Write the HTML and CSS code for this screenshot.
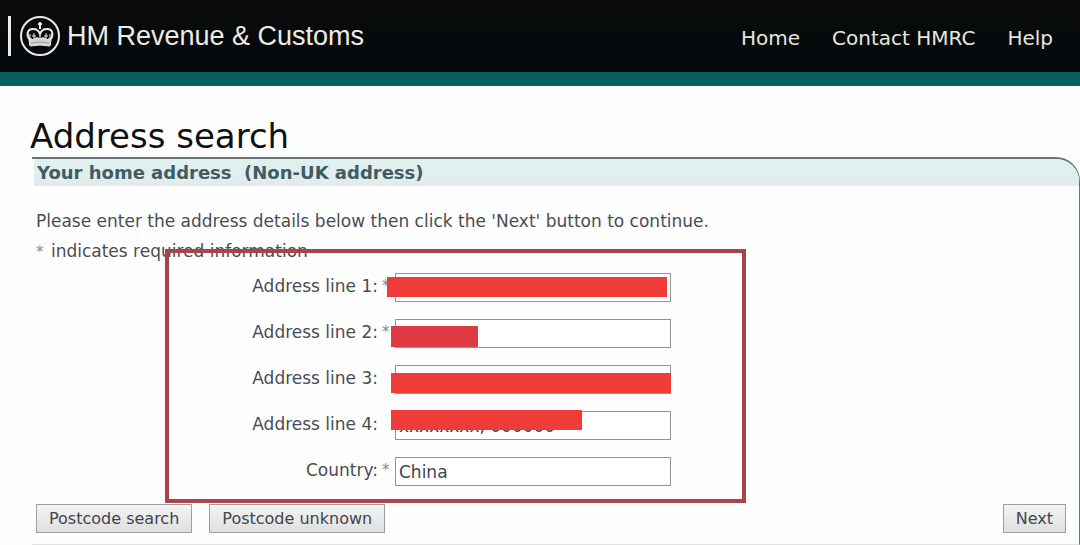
FILE: index.html
```html
<!DOCTYPE html>
<html lang="en">
<head>
    <meta charset="UTF-8">
    <meta name="viewport" content="width=device-width, initial-scale=1.0">
    <title>Address search</title>
    <link rel="stylesheet" href="styles.css">
</head>
<body>
    <header class="header">
        <div class="logo">
            <svg class="crest" width="40" height="40" viewBox="0 0 40 40" fill="none" stroke="#eeeae6">
                <circle cx="20" cy="20" r="19" stroke-width="2"/>
                <path d="M20 6v7M18 8h4" stroke-width="2"/>
                <path d="M10 24C6 19 7 13 13 13c4 0 6 2 7 5 1-3 3-5 7-5 6 0 7 6 3 11" stroke-width="2"/>
                <path d="M10 18v5M14 17v6M12 20h4M20 17v6M26 17v6M24 20h4M30 18v5" stroke-width="1"/>
                <path d="M9 24q2-3 4 0 3-4 7-1 4-3 7 1 2-3 4 0l-1 6q-10-2-20 0z" fill="#d5d3d0" stroke-width="1"/>
                <path d="M11 27q9-2 18 0" stroke="#999" stroke-width="1"/>
            </svg>
            <span>HM Revenue &amp; Customs</span>
        </div>
        <nav class="nav">
            <a href="#">Home</a>
            <a href="#">Contact HMRC</a>
            <a href="#">Help</a>
        </nav>
    </header>

    <main class="main">
        <h1>Address search</h1>
        <form class="panel">
            <h2>Your home address&nbsp; (Non-UK address)</h2>
            <p>Please enter the address details below then click the 'Next' button to continue.</p>
            <p><span class="star">*</span> indicates required information</p>

            <div class="fields">
                <div class="row">
                    <label for="line1">Address line 1:</label>
                    <span class="star">*</span>
                    <div class="field"><input type="text" id="line1"><span class="bar bar1"></span></div>
                </div>
                <div class="row">
                    <label for="line2">Address line 2:</label>
                    <span class="star">*</span>
                    <div class="field"><input type="text" id="line2"><span class="bar bar2"></span></div>
                </div>
                <div class="row">
                    <label for="line3">Address line 3:</label>
                    <span class="star"></span>
                    <div class="field"><input type="text" id="line3"><span class="bar bar3"></span></div>
                </div>
                <div class="row">
                    <label for="line4">Address line 4:</label>
                    <span class="star"></span>
                    <div class="field"><input type="text" id="line4" value="xxxxxxxx, 000000"><span class="bar bar4"></span></div>
                </div>
                <div class="row">
                    <label for="country">Country:</label>
                    <span class="star">*</span>
                    <div class="field"><input type="text" id="country" value="China"></div>
                </div>
                <div class="outline"></div>
            </div>

            <div class="buttons">
                <button type="button">Postcode search</button>
                <button type="button">Postcode unknown</button>
                <button type="submit" class="next">Next</button>
            </div>
        </form>
    </main>
</body>
</html>
```

FILE: styles.css
```css
body {
    margin: 0;
    background: #fefefe;
    color: #4a4c54;
    font-family: Verdana, "DejaVu Sans", sans-serif;
    font-size: 17px;
    line-height: 30px;
}

.header {
    display: flex;
    justify-content: space-between;
    align-items: center;
    height: 72px;
    padding: 0 27px 0 8px;
    background: linear-gradient(#0a0b0a, #04090d);
    border-bottom: 14px solid #07605b;
}

.logo {
    display: flex;
    align-items: center;
    padding-left: 9px;
    border-left: 3px solid #eeeae6;
    height: 40px;
    gap: 7px;
    color: #eeeae6;
    font-family: Helvetica, "Liberation Sans", Arial, sans-serif;
    font-size: 27px;
}

.nav {
    display: flex;
    gap: 32px;
    padding-top: 4px;
}

.nav a {
    color: #e8e5df;
    font-size: 20px;
    text-decoration: none;
}

.main {
    padding: 30px 0 0 32px;
}

h1 {
    margin: 0 0 0 -2px;
    color: #101010;
    font-size: 34px;
    font-weight: normal;
    line-height: 41px;
}

.panel {
    border-top: 2px solid #66777a;
    border-right: 1px solid #66777a;
    border-top-right-radius: 24px;
    padding-bottom: 11px;
    border-bottom: 1px solid #e4e2de;
    overflow: hidden;
}

h2 {
    margin: 0 0 20px 2px;
    padding-left: 3px;
    background: linear-gradient(#dff1ee, #e3ebec);
    color: #3f5c63;
    font-size: 18px;
    line-height: 27px;
}

p {
    margin: 0 0 0 4px;
}

.star {
    color: #85858f;
    font-size: 15px;
}

p .star {
    margin-right: 2px;
}

.fields {
    position: relative;
    display: flex;
    flex-direction: column;
    gap: 17px;
    padding: 6px 0 18px;
}

.row {
    display: grid;
    grid-template-columns: 346px 9px 276px;
    column-gap: 4px;
    line-height: 27px;
}

.row label {
    text-align: right;
}

.field {
    position: relative;
}

.field input {
    display: block;
    box-sizing: border-box;
    width: 100%;
    height: 29px;
    padding: 0 3px;
    border: 1px solid #929496;
    background: #fff;
    color: #42444c;
    font: inherit;
}

/* marked-out values */
.bar {
    position: absolute;
    height: 20px;
    background: #f03c38;
}

.bar1 {
    left: -8px;
    top: 4px;
    width: 280px;
}

.bar2 {
    left: -4px;
    top: 7px;
    width: 87px;
    height: 21px;
    background: #e03a42;
}

.bar3 {
    left: -4px;
    top: 8px;
    width: 280px;
}

.bar4 {
    left: -4px;
    top: -1px;
    width: 191px;
}

.outline {
    position: absolute;
    left: 133px;
    top: -18px;
    bottom: 1px;
    width: 573px;
    border: 4px solid #a8444a;
    pointer-events: none;
}

.buttons {
    display: flex;
    gap: 17px;
    padding: 0 13px 0 4px;
}

button {
    height: 29px;
    padding: 0 12px;
    border: 1px solid #a09c9e;
    background: linear-gradient(#f4f4f4, #dedfe0);
    color: #42444c;
    font: inherit;
    font-size: 16px;
    line-height: 27px;
}

.next {
    margin-left: auto;
}
```
